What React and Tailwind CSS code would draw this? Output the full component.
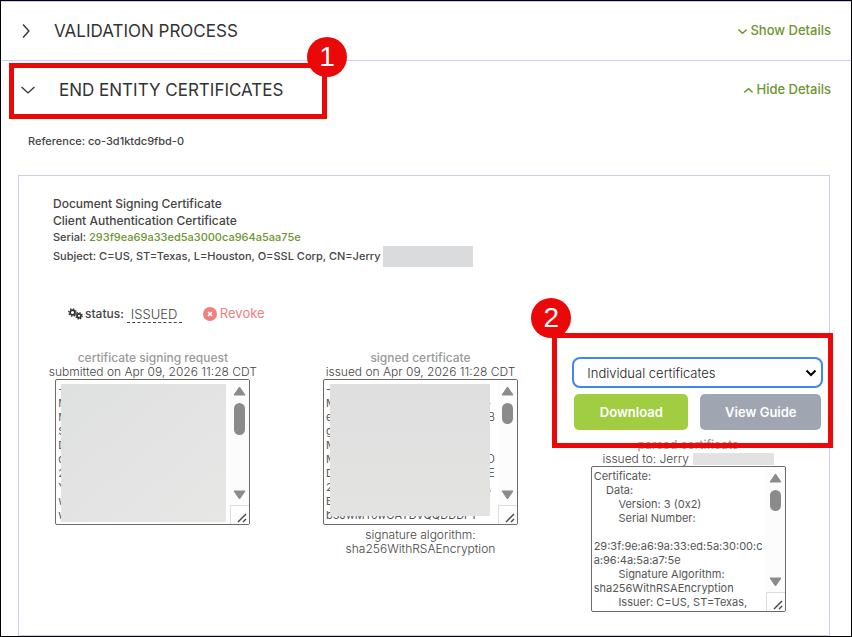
import React from "react";

function Chevron({ dir, className }) {
  const paths = {
    right: "M7 1 L17 12 L7 23",
    down: "M1 7 L12 17 L23 7",
    up: "M1 17 L12 7 L23 17",
  };
  const boxes = { right: "6 0 12 24", down: "0 6 24 12", up: "0 6 24 12" };
  return (
    <svg
      viewBox={boxes[dir]}
      className={className}
      fill="none"
      stroke="currentColor"
      strokeWidth="1.4"
      aria-hidden="true"
    >
      <path d={paths[dir]} vectorEffect="non-scaling-stroke" />
    </svg>
  );
}

function Gears({ className }) {
  return (
    <svg viewBox="0 0 15 12" className={className} fill="none" stroke="currentColor" aria-hidden="true">
      <circle cx="4.5" cy="4.5" r="2.4" strokeWidth="1.7" />
      <circle cx="4.5" cy="4.5" r="3.7" strokeWidth="1.4" strokeDasharray="1.45 1.456" />
      <circle cx="11" cy="7.8" r="2" strokeWidth="1.7" />
      <circle cx="11" cy="7.8" r="3.2" strokeWidth="1.3" strokeDasharray="1.25 1.263" />
    </svg>
  );
}

function SectionHeader({ title, open, children }) {
  return (
    <div className="relative flex h-[58px] items-center justify-between pl-5 pr-5">
      <h2 className="text-[17px] leading-6 text-[#333]">
        <button type="button" aria-expanded={open} className="flex items-center gap-6">
          {open ? (
            <Chevron dir="down" className="h-[8px] w-[14px]" />
          ) : (
            <Chevron dir="right" className="ml-px h-[14px] w-[8px]" />
          )}
          {title}
        </button>
      </h2>
      <a href="#details" className="flex items-center gap-[3px] text-[13px] font-medium text-[#6d9530]">
        <Chevron dir={open ? "up" : "down"} className="h-[5px] w-[9px]" />
        {open ? "Hide Details" : "Show Details"}
      </a>
      {children}
    </div>
  );
}

function Badge({ n, className }) {
  return (
    <span
      className={
        "absolute z-20 flex size-10 items-center justify-center rounded-full bg-[#ea0808] font-['Liberation_Sans',Arial,sans-serif] text-[28px] leading-none text-white " +
        className
      }
    >
      {n}
    </span>
  );
}

function TextBox({ label, value, thumb, children }) {
  return (
    <div className="relative mx-auto flex h-[146px] w-[195px] overflow-hidden rounded-[2px] border border-[#6b6b6b] bg-white">
      <textarea
        aria-label={label}
        readOnly
        defaultValue={value}
        className="min-w-0 flex-1 resize-none overflow-hidden whitespace-pre py-[2px] pl-[2px] text-left text-[11px] font-normal leading-[14px] text-[#555] outline-none"
      />
      <svg width="19" height="144" viewBox="0 0 19 144" className="shrink-0" aria-hidden="true">
        <rect width="19" height="144" fill="#fcfcfc" />
        <path d="M9.5 7 L15 15 H4 Z" fill="#8b8b8b" stroke="#8b8b8b" strokeLinejoin="round" />
        <rect x="4" y="23" width="11" height={thumb} rx="5.5" fill="#8b8b8b" />
        <path d="M9.5 119 L15 111 H4 Z" fill="#8b8b8b" stroke="#8b8b8b" strokeLinejoin="round" />
        <path d="M0.5 144 V125.5 H19" fill="#fff" stroke="#dcdcdc" />
        <path d="M8 142 L16 134 M13 142 L16 139" stroke="#444" strokeWidth="1.4" />
      </svg>
      {children}
    </div>
  );
}

const csr = "-\nM\nM\nS\nD\nc\n2\nY\nw\nw";
const signed = "-\nM\ne\ng\nM\nM\nD\n2\nB\nb3JwMTowOAYDVQQDDDFT";
const parsed = `Certificate:
    Data:
        Version: 3 (0x2)
        Serial Number:

29:3f:9e:a6:9a:33:ed:5a:30:00:c
a:96:4a:5a:a7:5e
        Signature Algorithm:
sha256WithRSAEncryption
        Issuer: C=US, ST=Texas,`;

export default function App() {
  return (
    <main className="min-h-screen border border-black bg-white font-[Inter,sans-serif] text-[#444]">
      <div className="border-t border-[#ccccff]">
        <SectionHeader title="VALIDATION PROCESS" open={false} />
      </div>
      <section className="border-t border-[#ccccff]">
        <SectionHeader title="END ENTITY CERTIFICATES" open>
          <div className="pointer-events-none absolute left-[8px] top-[2px] h-14 w-[318px] border-[5px] border-[#ea0808]" />
          <Badge n="1" className="left-[306px] top-[-24px]" />
        </SectionHeader>
        <p className="pb-[26px] pl-[27px] pt-[14px] text-[11px] font-medium leading-4">Reference: co-3d1ktdc9fbd-0</p>

        <div className="ml-[17px] mr-[21px] border border-[#ccccff] pb-[23px]">
          <div className="pl-[34px] pt-[19px] text-xs font-medium leading-[17px]">
            <p>Document Signing Certificate</p>
            <p>Client Authentication Certificate</p>
            <p className="text-[11px] leading-[17px]">
              Serial:{" "}
              <a href="#serial" className="text-[#6d9530]">
                293f9ea69a33ed5a3000ca964a5aa75e
              </a>
            </p>
            <p className="flex h-[20px] items-center gap-[2px] text-[11px]">
              Subject: C=US, ST=Texas, L=Houston, O=SSL Corp, CN=Jerry
              <span className="h-[21px] w-[90px] bg-[#dadbdd]" />
            </p>
          </div>

          <div className="mt-[38px] flex h-5 items-center pl-[49px] text-[13px]">
            <Gears className="mr-[2px] h-3 w-[15px] text-[#333]" />
            <span className="text-xs font-medium">status:</span>
            <a href="#status" className="ml-[3px] w-[55px] border-b border-dashed border-[#444] pl-1 font-light leading-4">
              ISSUED
            </a>
            <button type="button" className="ml-[21px] flex items-center gap-[3px] text-[#f08080]">
              <svg viewBox="0 0 14 14" className="size-[14px]" aria-hidden="true">
                <circle cx="7" cy="7" r="7" fill="currentColor" />
                <path d="M5 5 L9 9 M9 5 L5 9" stroke="#fff" strokeWidth="1.5" />
              </svg>
              Revoke
            </button>
          </div>

          <div className="mt-[27px] grid grid-cols-3 pr-[7px] text-center text-xs font-light leading-[14px]">
            <div>
              <p className="font-medium text-[#999]">certificate signing request</p>
              <p>submitted on Apr 09, 2026 11:28 CDT</p>
              <TextBox label="certificate signing request" value={csr} thumb={32}>
                <span className="absolute left-[5px] top-1 h-[138px] w-[165px] bg-linear-to-br from-[#dfe0e0] to-[#e7e7e6]" />
              </TextBox>
            </div>

            <div>
              <p className="font-medium text-[#999]">signed certificate</p>
              <p>issued on Apr 09, 2026 11:28 CDT</p>
              <TextBox label="signed certificate" value={signed} thumb={21}>
                <span className="absolute right-[22px] top-4 whitespace-pre text-right leading-[14px] text-[#444]">
                  {"+ \nB\n\n\nD\nE\n, "}
                </span>
                <span className="absolute left-[6px] top-1 h-[132px] w-[160px] bg-linear-to-b from-[#dfdfdf] to-[#e3e3e2]" />
              </TextBox>
              <p className="pt-[3px]">signature algorithm:</p>
              <p>sha256WithRSAEncryption</p>
            </div>

            <div className="relative pt-[6px]">
              <div className="pointer-events-none absolute left-[-2px] right-[-11px] top-[-18px] z-10 h-[115px] border-[5px] border-[#ea0808]" />
              <Badge n="2" className="left-[-23px] top-[-53px]" />
              <div className="relative ml-[18px] w-[251px]">
                <select
                  aria-label="Certificate format"
                  defaultValue="individual"
                  className="h-[31px] w-full appearance-none rounded-lg border-2 border-[#4285f4] bg-white pl-[13px] text-[13px] font-light text-[#222] outline-none"
                >
                  <option value="individual">Individual certificates</option>
                </select>
                <svg viewBox="0 0 12 8" className="pointer-events-none absolute right-[6px] top-[12px] h-[8px] w-[12px]" aria-hidden="true">
                  <path d="M1.5 1.5 L6 6 L10.5 1.5" fill="none" stroke="#000" strokeWidth="2" />
                </svg>
              </div>
              <div className="ml-5 mt-[6px] flex w-[247px] gap-3 text-[13px] font-semibold text-white">
                <button type="button" className="h-9 w-[114px] rounded-[5px] bg-[#a0cd42]">
                  Download
                </button>
                <button type="button" className="h-9 flex-1 rounded-[5px] bg-[#9fa5b1]">
                  View Guide
                </button>
              </div>
              <p className="mt-[8px] font-medium text-[#999]">parsed certificate</p>
              <p className="flex items-center justify-center gap-1">
                issued to: Jerry
                <span className="h-3 w-[81px] bg-[#e2e2e2]" />
              </p>
              <TextBox label="parsed certificate" value={parsed} thumb={21} />
            </div>
          </div>
        </div>
      </section>
    </main>
  );
}
